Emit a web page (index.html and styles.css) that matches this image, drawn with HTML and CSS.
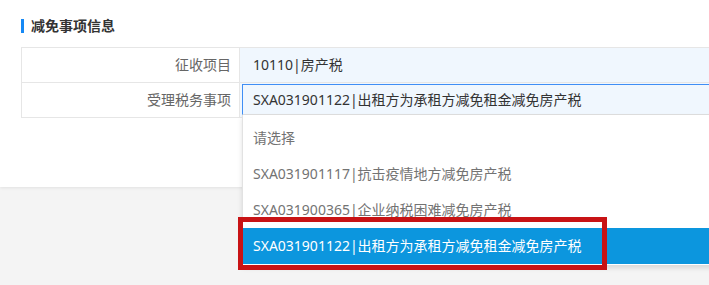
FILE: index.html
```html
<!DOCTYPE html>
<html lang="zh-CN">
<head>
<meta charset="utf-8">
<title>减免事项信息</title>
<link rel="stylesheet" href="styles.css">
</head>
<body>
<div class="page">
  <div class="card">
    <div class="section-title">减免事项信息</div>
    <div class="form-table">
      <div class="row">
        <div class="label">征收项目</div>
        <div class="value"><span class="value-text">10110|房产税</span></div>
      </div>
      <div class="row">
        <div class="label">受理税务事项</div>
        <div class="value">
          <div class="select">
            <div class="select-input">SXA031901122|出租方为承租方减免租金减免房产税</div>
            <ul class="dropdown">
              <li class="option placeholder">请选择</li>
              <li class="option">SXA031901117|抗击疫情地方减免房产税</li>
              <li class="option">SXA031900365|企业纳税困难减免房产税</li>
              <li class="option selected">SXA031901122|出租方为承租方减免租金减免房产税</li>
            </ul>
          </div>
        </div>
      </div>
    </div>
  </div>
  <div class="highlight-box"></div>
</div>
</body>
</html>
```

FILE: styles.css
```css
html, body {
  margin: 0;
  padding: 0;
}
body {
  background: #f4f4f4;
  font-family: "Noto Sans", "Noto Sans CJK SC", sans-serif;
  font-size: 14px;
  color: #333;
  overflow: hidden;
  width: 709px;
  height: 285px;
}
.page {
  position: relative;
  width: 709px;
  height: 285px;
  overflow: hidden;
}
.card {
  background: #fff;
  width: 780px;
  height: 187px;
  box-sizing: border-box;
  padding: 18px 0 0 21px;
  box-shadow: 0 1px 3px rgba(0, 0, 0, 0.08);
}
.section-title {
  display: flex;
  align-items: center;
  height: 16px;
  line-height: 16px;
  font-weight: bold;
  font-size: 14px;
  color: #333;
}
.section-title::before {
  content: "";
  display: block;
  width: 3px;
  height: 14px;
  background: #1689f5;
  margin-right: 7px;
}
.form-table {
  margin-top: 13px;
  border-top: 1px solid #e6e6e6;
  border-left: 1px solid #e6e6e6;
}
.row {
  display: flex;
  height: 34px;
  border-bottom: 1px solid #e6e6e6;
}
.label {
  width: 218px;
  flex: none;
  border-right: 1px solid #e6e6e6;
  text-align: right;
  padding-right: 8px;
  box-sizing: border-box;
  line-height: 34px;
  color: #666;
  background: #fff;
}
.value {
  flex: 1;
  background: #f0f7fe;
  line-height: 34px;
  position: relative;
}
.value-text {
  padding-left: 13px;
  color: #333;
}
.select {
  position: relative;
  margin: 1px 0 0 2px;
}
.select-input {
  box-sizing: border-box;
  border: 1px solid #3f8ef5;
  border-bottom-color: #dedede;
  height: 31px;
  line-height: 29px;
  padding-left: 10px;
  color: #333;
  background: #f0f7fe;
  white-space: nowrap;
}
.dropdown {
  position: absolute;
  top: 31px;
  left: 0;
  right: 0;
  margin: 0;
  padding: 5px 0 1px;
  list-style: none;
  background: #fff;
  border-left: 1px solid #e2e2e2;
  box-shadow: 0 3px 5px rgba(0, 0, 0, 0.12);
  z-index: 2;
}
.option {
  height: 36px;
  line-height: 36px;
  padding-left: 10px;
  color: #737373;
  white-space: nowrap;
}
.option.selected {
  background: #0c96de;
  color: #fff;
}
.highlight-box {
  position: absolute;
  left: 238px;
  top: 217px;
  width: 369px;
  height: 53px;
  box-sizing: border-box;
  border: 5px solid #c81315;
  z-index: 3;
}
```
